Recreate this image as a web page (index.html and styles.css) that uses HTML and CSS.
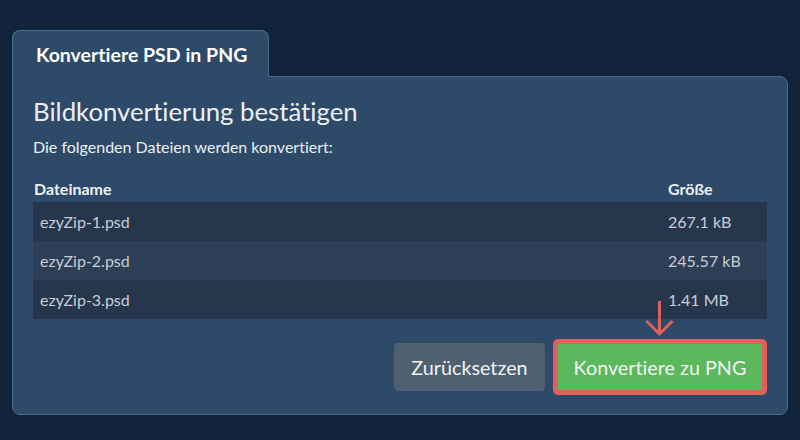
FILE: index.html
```html
<!DOCTYPE html>
<html lang="de">
<head>
<meta charset="utf-8">
<title>Konvertiere PSD in PNG</title>
<link rel="stylesheet" href="styles.css">
</head>
<body>
<div class="card">
  <div class="tab">Konvertiere PSD in PNG</div>
  <div class="panel">
    <h1 class="title">Bildkonvertierung bestätigen</h1>
    <p class="subtitle">Die folgenden Dateien werden konvertiert:</p>
    <div class="table">
      <div class="thead">
        <div class="th name">Dateiname</div>
        <div class="th size">Größe</div>
      </div>
      <div class="tr odd">
        <div class="td name">ezyZip-1.psd</div>
        <div class="td size">267.1 kB</div>
      </div>
      <div class="tr even">
        <div class="td name">ezyZip-2.psd</div>
        <div class="td size">245.57 kB</div>
      </div>
      <div class="tr odd">
        <div class="td name">ezyZip-3.psd</div>
        <div class="td size">1.41 MB</div>
      </div>
    </div>
    <div class="actions">
      <button class="btn btn-reset">Zurücksetzen</button>
      <button class="btn btn-convert">Konvertiere zu PNG</button>
    </div>
  </div>
  <svg class="arrow" width="30" height="38" viewBox="0 0 30 38" aria-hidden="true">
    <line x1="14.5" y1="1" x2="14.5" y2="34" stroke="#e0605a" stroke-width="3"/>
    <polyline points="1.5,21 14.5,34 27.5,21" fill="none" stroke="#e0605a" stroke-width="3"/>
  </svg>
</div>
</body>
</html>
```

FILE: styles.css
```css
* { box-sizing: border-box; }

html, body {
  margin: 0;
  background: #11233a;
  font-family: Lato, "Open Sans", "Liberation Sans", sans-serif;
  font-variant-ligatures: no-common-ligatures;
  color: #eceff3;
}

body {
  padding: 30px 12px 0 12px;
}

.card {
  position: relative;
  width: 776px;
}

.tab {
  position: relative;
  z-index: 1;
  width: 257px;
  height: 47px;
  margin-bottom: -1px;
  padding: 2px 0 0 23px;
  background: #2d4a69;
  border: 1px solid #4d6a8a;
  border-bottom: 0;
  border-radius: 8px 8px 0 0;
  font-size: 19.5px;
  font-weight: 700;
  line-height: 44px;
  color: #ffffff;
  white-space: nowrap;
}

.panel {
  background: #2d4a69;
  border: 1px solid #4d6a8a;
  border-radius: 0 8px 8px 8px;
  padding: 19px 20px 19px 20px;
}

.title {
  margin: 0;
  font-size: 25.75px;
  font-weight: 400;
  line-height: 1.2;
  color: #eceff3;
}

.subtitle {
  margin: 10px 0 0 0;
  font-size: 16px;
  font-weight: 400;
  line-height: 1.2;
  color: #eceff3;
}

.table {
  margin-top: 23px;
}

.thead, .tr {
  display: grid;
  grid-template-columns: 634px 1fr;
}

.thead {
  height: 23px;
  font-size: 16px;
  font-weight: 700;
  line-height: 19px;
  color: #eef1f4;
}

.th.name { padding-left: 1px; }
.th.size { padding-left: 1px; }

.tr {
  height: 39px;
  align-items: center;
  font-size: 16px;
  color: #c8cdd5;
}

.tr.odd { background: #26374d; }
.tr.even { background: #2c3f57; }

.td.name { padding-left: 7px; }
.td.size { padding-left: 1px; }

.actions {
  margin-top: 20px;
  display: flex;
  justify-content: flex-end;
  align-items: center;
  gap: 8px;
}

.btn {
  font-family: Lato, "Open Sans", "Liberation Sans", sans-serif;
  font-variant-ligatures: no-common-ligatures;
  font-size: 19.75px;
  font-weight: 400;
  color: #f1f3f5;
  cursor: pointer;
  padding: 0;
}

.btn-reset {
  width: 151px;
  height: 48px;
  background: #4f6070;
  border: 0;
  border-radius: 4px;
}

.btn-convert {
  width: 214px;
  height: 56px;
  background: #5cb85c;
  border: 5px solid #e0605a;
  border-radius: 5px;
}

.arrow {
  position: absolute;
  left: 633px;
  top: 270px;
}
```
